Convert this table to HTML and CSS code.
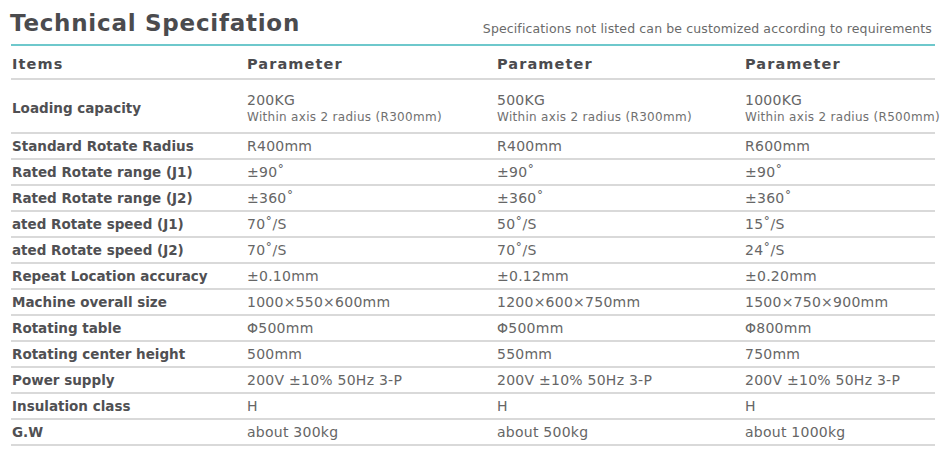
FILE: index.html
```html
<!DOCTYPE html>
<html>
<head>
<meta charset="utf-8">
<link rel="stylesheet" href="styles.css">
</head>
<body>
<div class="spec">
  <div class="head">
    <h1 class="title">Technical Specifation</h1>
    <div class="note">Specifications not listed can be customized according to requirements</div>
  </div>
  <div class="table">
    <div class="row hrow"><div>Items</div><div>Parameter</div><div>Parameter</div><div>Parameter</div></div>
    <div class="row tall"><div class="lab">Loading capacity</div><div class="val">200KG<span class="sub">Within axis 2 radius (R300mm)</span></div><div class="val">500KG<span class="sub">Within axis 2 radius (R300mm)</span></div><div class="val">1000KG<span class="sub">Within axis 2 radius (R500mm)</span></div></div>
    <div class="row"><div class="lab">Standard Rotate Radius</div><div class="val">R400mm</div><div class="val">R400mm</div><div class="val">R600mm</div></div>
    <div class="row"><div class="lab">Rated Rotate range (J1)</div><div class="val">±90˚</div><div class="val">±90˚</div><div class="val">±90˚</div></div>
    <div class="row"><div class="lab">Rated Rotate range (J2)</div><div class="val">±360˚</div><div class="val">±360˚</div><div class="val">±360˚</div></div>
    <div class="row"><div class="lab">ated Rotate speed (J1)</div><div class="val">70˚/S</div><div class="val">50˚/S</div><div class="val">15˚/S</div></div>
    <div class="row"><div class="lab">ated Rotate speed (J2)</div><div class="val">70˚/S</div><div class="val">70˚/S</div><div class="val">24˚/S</div></div>
    <div class="row"><div class="lab">Repeat Location accuracy</div><div class="val">±0.10mm</div><div class="val">±0.12mm</div><div class="val">±0.20mm</div></div>
    <div class="row"><div class="lab">Machine overall size</div><div class="val">1000×550×600mm</div><div class="val">1200×600×750mm</div><div class="val">1500×750×900mm</div></div>
    <div class="row"><div class="lab">Rotating table</div><div class="val">Φ500mm</div><div class="val">Φ500mm</div><div class="val">Φ800mm</div></div>
    <div class="row"><div class="lab">Rotating center height</div><div class="val">500mm</div><div class="val">550mm</div><div class="val">750mm</div></div>
    <div class="row"><div class="lab">Power supply</div><div class="val">200V ±10% 50Hz 3-P</div><div class="val">200V ±10% 50Hz 3-P</div><div class="val">200V ±10% 50Hz 3-P</div></div>
    <div class="row"><div class="lab">Insulation class</div><div class="val">H</div><div class="val">H</div><div class="val">H</div></div>
    <div class="row"><div class="lab">G.W</div><div class="val">about 300kg</div><div class="val">about 500kg</div><div class="val">about 1000kg</div></div>
  </div>
</div>
</body>
</html>
```

FILE: styles.css
```css
html, body {
  margin: 0;
  padding: 0;
  background: #ffffff;
}
body {
  font-family: "DejaVu Sans", "Liberation Sans", sans-serif;
  color: #5a5a5c;
}
.spec {
  width: 924px;
  margin-left: 11px;
}
.head {
  display: flex;
  justify-content: space-between;
  align-items: flex-end;
  height: 46px;
  border-bottom: 2px solid #6ec8cc;
  box-sizing: border-box;
  padding-bottom: 9px;
}
.title {
  margin: 0 0 0 -1px;
  font-size: 23px;
  font-weight: bold;
  color: #4b4b4e;
  letter-spacing: 0.75px;
  line-height: 1;
}
.note {
  font-size: 12.5px;
  color: #6a6a6a;
  margin-right: 3px;
  letter-spacing: 0.13px;
  line-height: 1;
}
.row {
  display: grid;
  grid-template-columns: 235px 250px 248px 1fr;
  align-items: center;
  height: 26px;
  box-sizing: border-box;
  border-bottom: 2px solid #d9d9d9;
  padding-left: 1px;
  white-space: nowrap;
}
.hrow {
  height: 34px;
  font-weight: bold;
  font-size: 14.5px;
  color: #4b4b4e;
  letter-spacing: 1.1px;
  padding-top: 3px;
}
.tall {
  height: 54px;
  padding-top: 4px;
}
.lab {
  font-weight: bold;
  font-size: 13.5px;
  color: #505053;
}
.val {
  font-size: 14px;
  color: #666666;
  letter-spacing: 0.25px;
}
.sub {
  display: block;
  font-size: 12px;
  color: #707070;
  letter-spacing: 0.3px;
  margin-top: 2px;
}
```
